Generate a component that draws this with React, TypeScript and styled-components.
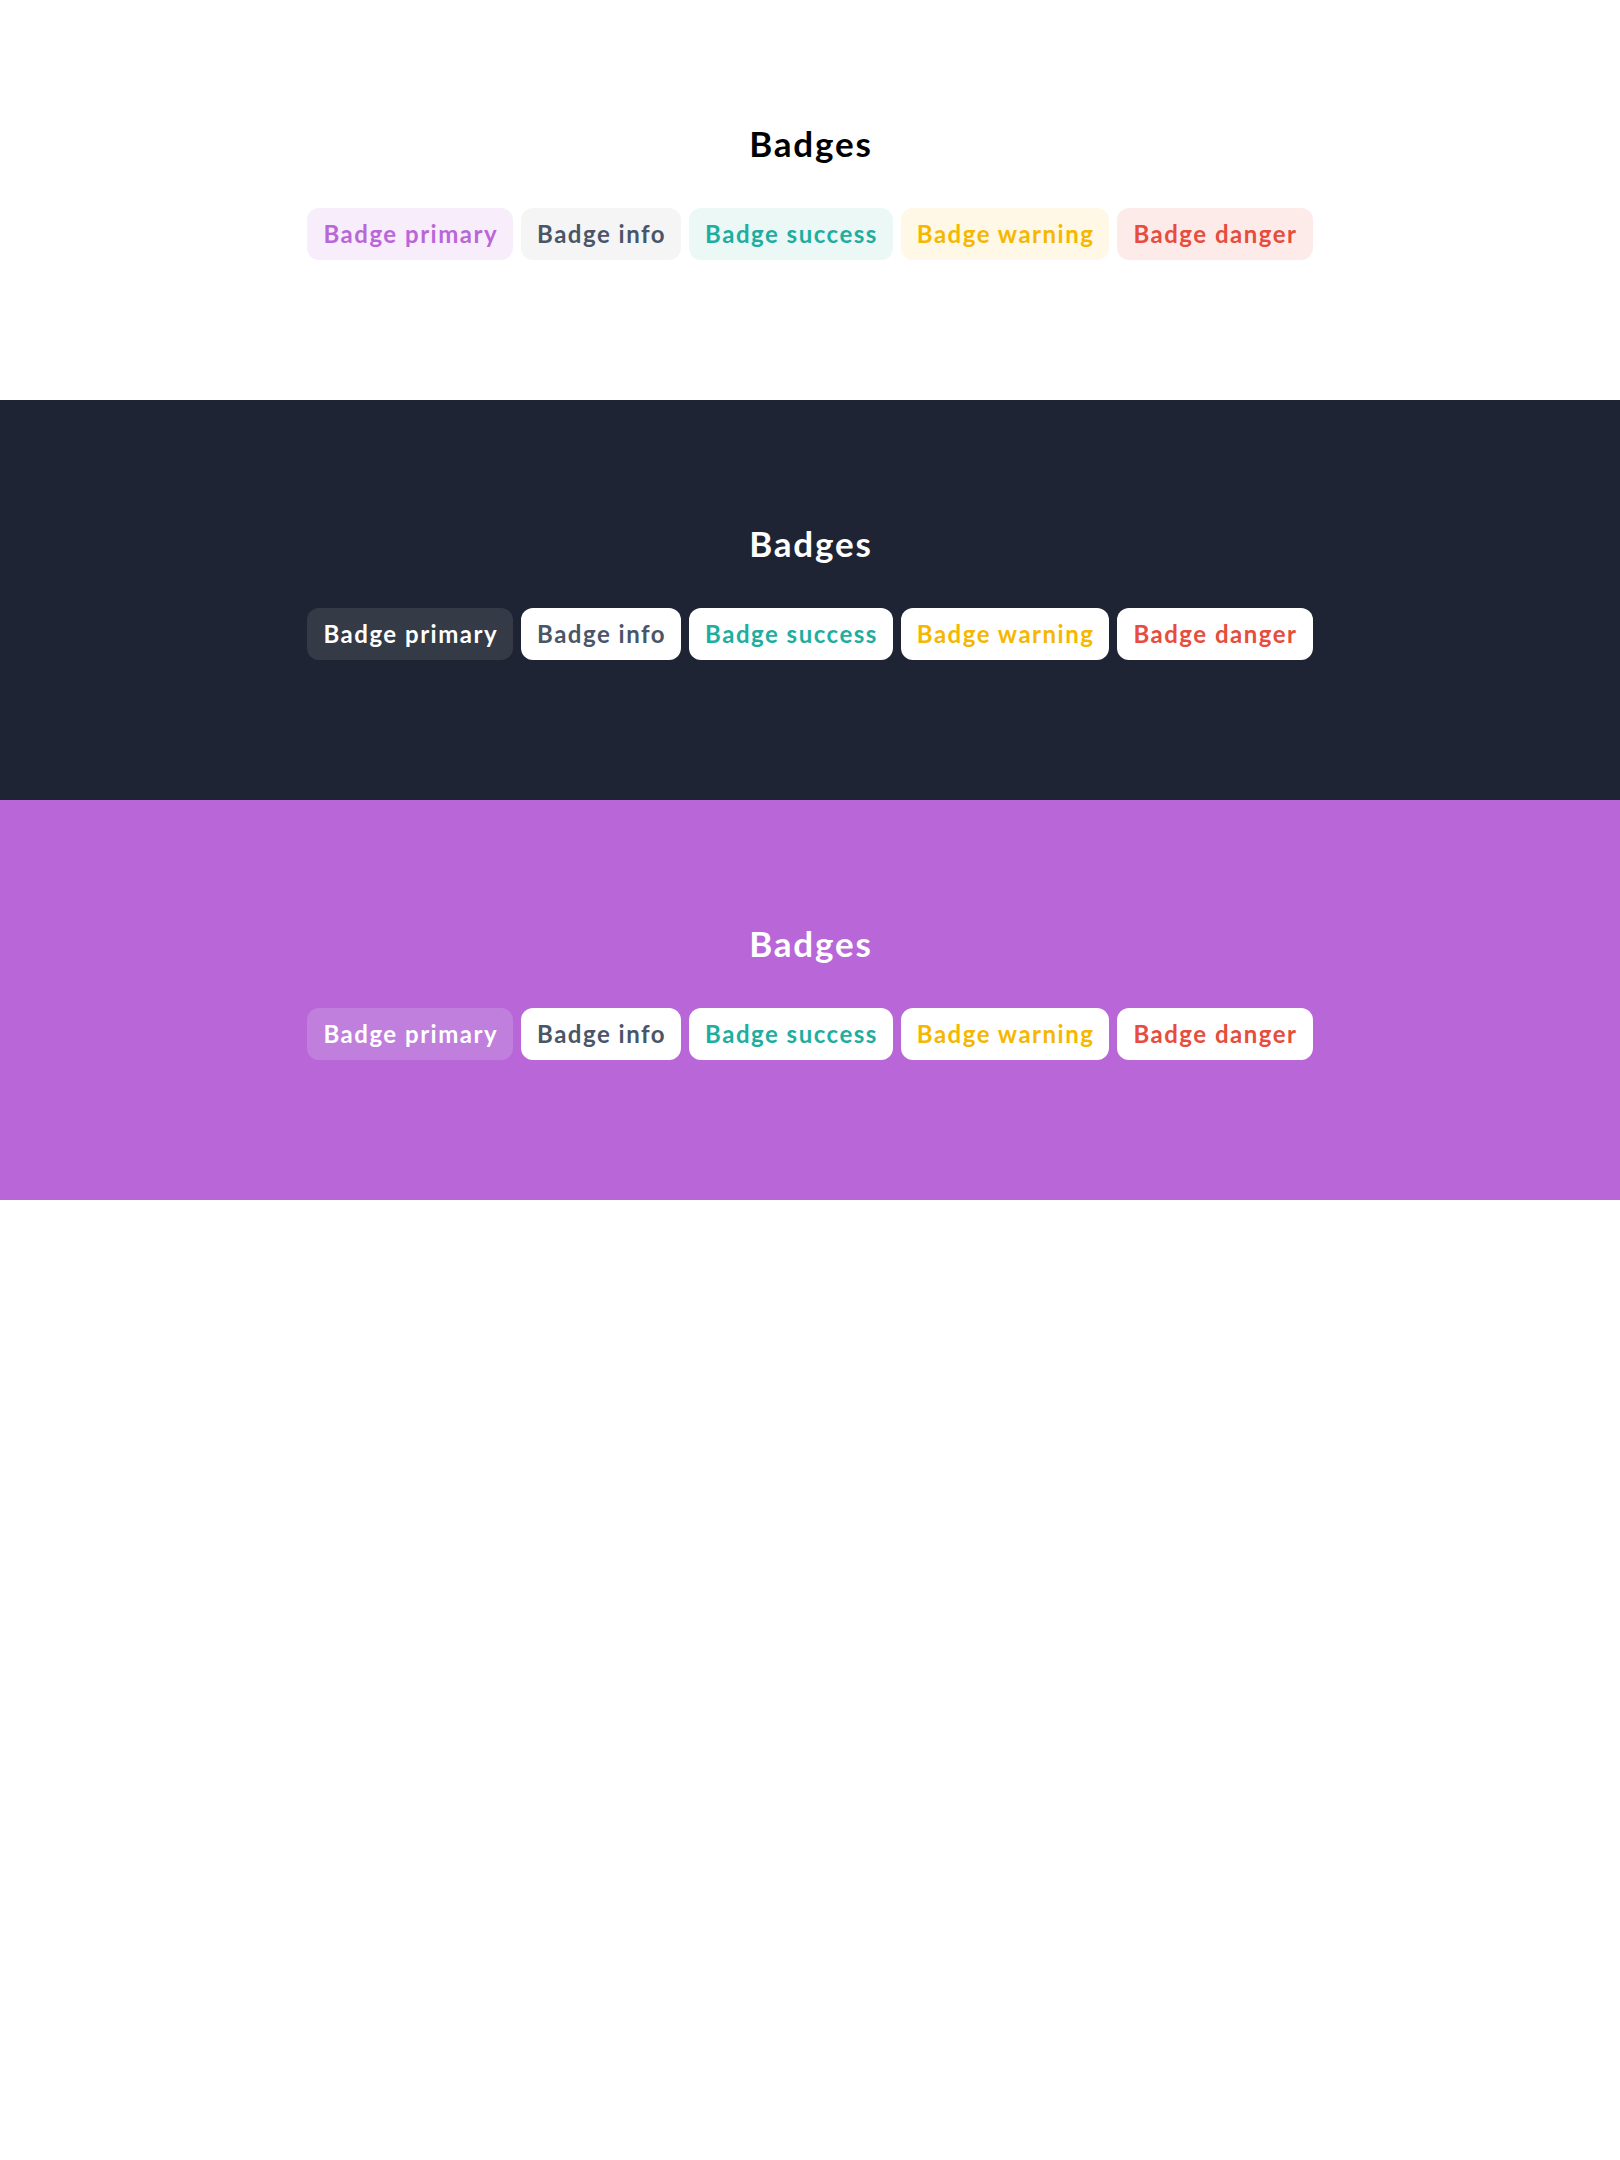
import React from "react";
import styled, { createGlobalStyle, css } from "styled-components";

const GlobalStyle = createGlobalStyle`
  html, body {
    margin: 0;
    padding: 0;
    background: #ffffff;
    font-family: Lato, "Open Sans", sans-serif;
  }
`;

type Theme = "light" | "dark" | "purple";
type Variant = "primary" | "info" | "success" | "warning" | "danger";

const sectionBg: Record<Theme, string> = {
  light: "#ffffff",
  dark: "#1e2433",
  purple: "#b967d8",
};

const Section = styled.section<{ $theme: Theme }>`
  height: 400px;
  box-sizing: border-box;
  padding-top: 126px;
  background: ${(p) => sectionBg[p.$theme]};
  display: flex;
  flex-direction: column;
  align-items: center;
  gap: 47px;
`;

const Title = styled.h2<{ $theme: Theme }>`
  margin: 0;
  font-family: Lato, "Open Sans", sans-serif;
  font-size: 35px;
  line-height: 35px;
  font-weight: 700;
  letter-spacing: 1.8px;
  padding-left: 1.8px;
  color: ${(p) => (p.$theme === "light" ? "#000000" : "#ffffff")};
`;

const Row = styled.div`
  display: flex;
  gap: 8px;
`;

const textColor: Record<Variant, string> = {
  primary: "#b967d8",
  info: "#4a5568",
  success: "#1eaea0",
  warning: "#f5b700",
  danger: "#e74c3c",
};

const lightBg: Record<Variant, string> = {
  primary: "#f8edfb",
  info: "#f5f5f6",
  success: "#ebf8f6",
  warning: "#fff8e6",
  danger: "#fdebea",
};

const Badge = styled.span<{ $variant: Variant; $theme: Theme }>`
  display: inline-flex;
  align-items: center;
  justify-content: center;
  height: 52px;
  padding: 0 15px 0 16px;
  border-radius: 12px;
  font-family: Lato, "Open Sans", sans-serif;
  font-size: 24px;
  line-height: 52px;
  font-weight: 700;
  letter-spacing: 1.5px;
  white-space: nowrap;
  ${(p) =>
    p.$theme === "light"
      ? css`
          background: ${lightBg[p.$variant]};
          color: ${textColor[p.$variant]};
        `
      : p.$variant === "primary"
      ? css`
          background: ${p.$theme === "dark" ? "#353a47" : "#c17fdd"};
          color: #ffffff;
        `
      : css`
          background: #ffffff;
          color: ${textColor[p.$variant]};
        `}
`;

const badges: { variant: Variant; label: string }[] = [
  { variant: "primary", label: "Badge primary" },
  { variant: "info", label: "Badge info" },
  { variant: "success", label: "Badge success" },
  { variant: "warning", label: "Badge warning" },
  { variant: "danger", label: "Badge danger" },
];

const themes: Theme[] = ["light", "dark", "purple"];

export default function App() {
  return (
    <>
      <GlobalStyle />
      {themes.map((t) => (
        <Section key={t} $theme={t}>
          <Title $theme={t}>Badges</Title>
          <Row>
            {badges.map((b) => (
              <Badge key={b.variant} $variant={b.variant} $theme={t}>
                {b.label}
              </Badge>
            ))}
          </Row>
        </Section>
      ))}
    </>
  );
}
